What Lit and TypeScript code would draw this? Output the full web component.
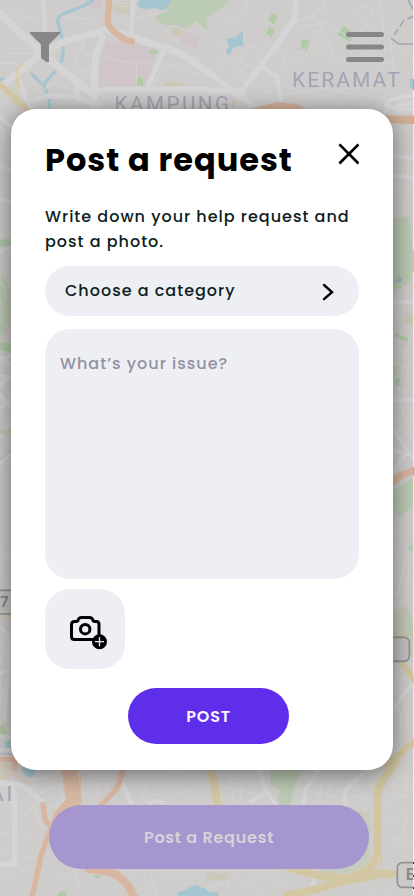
import { LitElement, html, css } from "lit";
import { customElement } from "lit/decorators.js";

@customElement("city-map")
class CityMap extends LitElement {
  static styles = css`
    :host { display: block; }
    svg { display: block; }
    .r { fill: none; stroke: #d5d5d6; stroke-linejoin: round; stroke-linecap: round; filter: drop-shadow(0 0 2px #c3c5cd); }
    .m { fill: none; stroke: #d6d5d5; stroke-width: 2.5; }
    .o { fill: none; stroke: #d7b7a2; stroke-linejoin: round; stroke-linecap: round; filter: drop-shadow(0 0 2px #dcd9d6); }
    .y { fill: none; stroke: #d3c7a3; stroke-linejoin: round; filter: drop-shadow(0 0 2px #dcd9d6); }
    .w { fill: none; stroke: #a5c6d0; stroke-linejoin: round; }
    .water { fill: #a5c6d0; }
    .g { fill: #bccbb3; }
    .g2 { fill: #b1cba8; }
    .p { fill: #d0c5c9; }
    .t { fill: #cdc8b7; }
    .place { font-family: "Roboto", sans-serif; fill: #a3a4b3; }
    .code { font-family: "Roboto", sans-serif; font-weight: 700; fill: #8b8b8b; }
  `;
  render() {
    return html`<svg width="414" height="896" viewBox="0 0 414 896">
      <defs>
        <clipPath id="a"><rect width="621" height="360" /></clipPath>
        <clipPath id="b"><rect width="621" height="408" /></clipPath>
        <clipPath id="c"><rect width="90" height="1020" /></clipPath>
      </defs>
      <rect width="414" height="896" fill="#cfcdcc" />
      <g transform="scale(.33333)"><g clip-path="url(#a)">
        <path class="p" d="M318 120L470 146L462 185L432 260H296L298 190ZM258 0H306V28L270 24ZM555 95L598 108L590 148L536 130Z" />
        <path class="t" d="M345 12H392V42L345 38ZM518 80L556 94L542 112L510 102ZM492 246H550V258H492Z" />
        <path class="g" d="M505 0H621V92L588 62L560 88L535 76L490 74L466 56L472 40L497 38Z" />
        <path class="g2" d="M448 150L474 151V162L448 161ZM410 234H429V257H408Z" />
        <path class="water" d="M418 0H515L492 32L466 25L430 28L411 18Z" />
        <path class="w" stroke-width="10" d="M280 0L250 18L205 36Q174 45 173 63L184 105L190 148L184 188M92 220L130 255L165 213M130 255L148 292V330M0 237L20 241L45 228" />
        <path class="m" d="M183 48L265 58L306 80M230 110L245 150L276 170M250 130L220 205M20 90L80 50L110 80M42 65L90 115M20 160H110M0 190H55M308 165Q350 190 400 186L465 190M410 188V260M345 48L392 60M355 20H395M250 120L270 205L210 225M180 210L232 250M0 65L50 30L108 60M240 240L275 220M100 290L160 250L230 275M455 260L500 190L621 230M300 285L360 310M390 60L480 40M480 75L555 140L600 180" />
        <path class="r" stroke-width="22" d="M-10 30L120 155L280 285M-10 272L120 165L180 130L320 88L490 142Q550 155 630 222M307 112L286 170L280 360" />
        <path class="r" stroke-width="15" d="M130 -5L135 85L115 130M400 0L393 115M492 152L440 265M275 272L350 267H630M232 240V290L150 288L80 304M60 248L90 330M230 295L300 315" />
        <path class="o" stroke-width="20" d="M328 -8L323 68Q330 92 378 120L396 125" />
        <path class="y" stroke-width="17" d="M-5 250L45 292L92 340" />
        <path class="y" stroke-width="3" d="M74 198Q56 178 48 220L50 250L22 292M55 195V270L40 300M10 280Q35 300 60 255" />
      </g></g>
      <g transform="translate(207 0) scale(.33333)"><g clip-path="url(#a)">
        <path class="g" d="M0 0H72L45 22L0 55Z" />
        <path class="g2" d="M194 39L213 47L202 72L183 63ZM186 80L205 89L194 111L177 101ZM284 119L308 121L303 150L281 147ZM410 77L438 98L430 125L390 103Z" />
        <path class="water" d="M57 118L85 112L108 91V138L82 141L65 166L56 156L66 137Z" />
        <path class="m" d="M20 220L60 165L30 120M70 175L130 200L175 160M90 210L125 135L180 160M60 190L115 220M120 0L110 40L60 70M265 65L330 45L355 0M275 80L360 70L430 115M290 180L345 80L380 170M240 190L320 120L390 180M300 145L420 200M250 175L300 200M340 70L310 40L350 20L370 60M450 100L510 180L570 195M470 70L550 120L560 210M420 55L470 15L540 50M500 30L460 95M520 0L530 110M570 130L621 180M420 190L540 130M230 285L360 265L540 300M310 300L430 260M80 230L200 280M360 260L400 325M440 265L460 325M530 150L610 120M180 130L235 165L230 205M545 180L500 240" />
        <path class="r" stroke-width="18" d="M267 -8L263 58L205 140L100 278L125 310M-5 208L90 285L150 325M-5 271H100" />
        <path class="r" stroke-width="13" d="M160 198L210 230L222 300M540 330V308Q548 295 570 296L630 282M575 335V315L630 305" />
        <path fill="none" stroke="#a5a7af" stroke-width="5" stroke-dasharray="22 10" d="M621 48L590 62L555 115" />
        <path fill="none" stroke="#a5a7af" stroke-width="5" d="M552 115L575 132H621M600 -5L621 30" />
        <path fill="#d4b39d" d="M125 326L175 315L207 306L270 312L305 330ZM530 348L621 346V360H530Z" />
        <path fill="none" stroke="#d7b7a2" stroke-width="3" d="M78 330V300L90 307" />
        <path class="water" d="M607 236H621V270L609 260Z" />
      </g></g>
      <text class="place" x="292" y="86.700" font-size="21" textLength="107.500">KERAMAT</text>
      <text class="place" x="114.500" y="111" font-size="20.500" textLength="114.500">KAMPUNG</text>
      <g transform="translate(0 760) scale(.33333)"><g clip-path="url(#b)">
        <path class="t" d="M0 12H30V60L0 65Z" />
        <path class="water" d="M68 20H112Q110 45 90 54L70 40ZM530 400L585 375L621 388V408H535Z" />
        <path class="g2" d="M173 402L185 392L202 400L197 408H175ZM278 346H305L290 357Z" />
        <path class="m" d="M0 100L25 70M60 180L100 140L130 210M55 220L105 240M120 100L180 70L190 130L145 145M90 60L150 50M260 60L330 75M300 20L290 110M400 40L440 80L420 125M450 40L500 70L490 110M530 30L600 120M500 110L570 90M0 360L100 320M70 290L120 300M180 220L140 290M170 280L230 330L160 370M220 310L240 395M400 400L500 350L530 330M450 330L470 400M520 330L560 375M550 340L615 350M430 350L450 400M0 260L40 280M0 220H44M150 190L190 165M520 40L550 20" />
        <path class="r" stroke-width="17" d="M-5 68L50 74Q80 78 105 108L129 127M42 80L45 313L0 312M370 75L395 130" />
        <path class="r" stroke-width="12" d="M445 136Q472 110 490 134" />
        <path class="o" stroke-width="17" d="M129 133L136 180L154 204M372 10Q360 75 344 93L290 150L155 198L125 280L94 420" />
        <path class="o" stroke-width="48" d="M213 -5Q206 40 216 76L222 120" />
        <path class="o" stroke-width="25" d="M222 110L172 165L154 220M265 326L330 336Q380 352 405 420" />
        <path class="o" stroke-width="3" d="M38 0V45L0 60M48 0V50L90 74M175 30L210 70M242 40V80" />
        <path class="r" stroke-width="4" d="M398 310L386 350" />
        <text class="place" x="-29" y="122" font-size="62" letter-spacing="8">AI</text>
      </g></g>
      <g transform="translate(207 760) scale(.33333)"><g clip-path="url(#b)">
        <path class="g" d="M190 30H283L265 70L250 136H205L220 90L190 70Z" />
        <path fill="#c6cbbd" d="M435 170L490 150L488 290Q486 338 430 345L338 338V325H390Z" />
        <path class="t" d="M0 338L62 342V364L0 358ZM420 155L465 150V170L430 180Z" />
        <path class="water" d="M0 394L32 397L36 408H0Z" />
        <path class="m" d="M40 45L150 70M50 80L170 110M70 40L80 130M110 35L100 120M20 40L50 120M290 50L400 70M285 90L390 110M350 35L335 130M375 35L360 130M410 65L510 85M430 55L480 130M460 35L430 130M425 105L510 115M540 75L621 85M560 110H600V50L560 60ZM540 130L600 160L590 230L545 240M540 180L575 175M550 260L621 240M0 385L100 355L170 400M100 380L180 340M120 330L160 405M200 345L230 390M60 360L80 408M300 395L440 360M340 380L350 408M390 370L420 408M440 350L500 405M310 330L370 290M180 330L250 375M570 370L540 408M490 30L500 60" />
        <path class="r" stroke-width="14" d="M157 30L178 96L132 125M178 96L210 136M335 30L295 90L288 136M480 30L415 90V136M315 380L322 360" />
        <path class="y" stroke-width="25" d="M-5 20Q18 40 22 70L32 136M572 -5L535 50Q508 85 511 120V270Q510 300 485 330M240 320Q320 350 430 358Q475 354 510 342L575 340M230 408L320 390L430 356L485 325" />
        <path class="y" stroke-width="5" d="M524 285V335M500 335L519 285" />
        <rect x="571" y="308" width="100" height="74" rx="15" fill="#cbcaca" stroke="#929292" stroke-width="5" />
        <text class="code" x="596" y="361" font-size="48">E</text>
      </g></g>
      <g transform="translate(384 100) scale(.33333)"><g clip-path="url(#c)">
        <path fill="#d3b097" d="M0 45L90 52V73L0 68Z" />
        <path class="g" d="M20 360L50 350H76L84 420L86 510L75 550L20 580Z" />
        <path class="g2" d="M35 697L75 718L70 727L32 708ZM34 836L54 834L50 860L32 852Z" />
        <path fill="#a0bac1" d="M30 545L46 527L57 538L48 549Z" />
        <path class="t" d="M68 640L90 645V680L60 665ZM27 795H48L43 825L27 830Z" />
        <path class="m" d="M27 270L75 265L65 330M75 180L60 330M27 630L90 570M27 670L60 625M27 740L90 760M27 765L90 785M60 680L30 750M85 690L60 780M27 790L75 800M60 790L40 890M75 780L60 890M27 860L90 880M45 900L90 1020M65 900L40 1020M80 910V1020M27 940L80 1020" />
        <path class="r" stroke-width="14" d="M0 166L90 174M0 226L90 233M0 606H90M0 897L90 900M0 15L30 25L90 28M20 970L55 1030" />
      </g></g>
      <g transform="translate(384 430) scale(.33333)"><g clip-path="url(#c)">
        <path class="g" d="M27 182L90 142V222L48 266L27 235ZM70 355L90 335V375Z" />
        <path fill="#c5c9b6" d="M27 545L68 532L90 580V690L27 620Z" />
        <path class="m" d="M27 290L75 365M27 350L80 380M27 410L90 390M27 430L90 410M27 460L90 440M45 370L27 430M65 390L40 500M80 380L65 500M27 490L90 480M27 520L70 510M40 720L30 800M55 730L42 810M27 750L60 770M27 790L65 800M50 850Q75 830 70 880Q65 930 50 900ZM40 840L85 820" />
        <path class="r" stroke-width="12" d="M35 10L90 90M27 60L78 75M60 80L25 130M90 755L60 790L20 850L0 880" />
        <path class="o" stroke-width="22" d="M10 168L50 136L100 118" />
        <path class="y" stroke-width="20" d="M40 680L96 755M0 1010Q40 985 65 955L100 930" />
        <rect x="-30" y="622" width="106" height="72" rx="15" fill="#c5c4c3" stroke="#929292" stroke-width="5" />
      </g></g>
      <g transform="translate(0 100) scale(.33333)"><g clip-path="url(#c)">
        <path fill="#d3c7a3" d="M38 0L92 36V50L70 25L25 0Z" />
        <path class="g2" d="M0 420L40 415V435L0 438ZM0 725L40 732V760L0 750Z" />
        <path class="g" d="M0 515L36 570V675L0 715Z" />
        <path class="p" d="M12 700L36 680V728Z" />
        <path class="t" d="M8 985L36 972V1000L15 1008Z" />
        <path class="m" d="M0 70L36 150M5 90L30 180M0 350Q20 370 35 345M0 550L25 570M0 600Q15 625 0 640M0 520L20 600M0 660L36 690" />
        <path class="r" stroke-width="11" d="M0 50L45 95M0 195L40 215M0 300L40 305M-5 455L40 440M-5 780L40 765M-5 770L40 800M-5 830H40M-5 860L40 820M-5 880L40 930M-5 930L40 890M0 1010L40 960" />
      </g></g>
      <g transform="translate(0 430) scale(.33333)"><g clip-path="url(#c)">
        <path class="y" stroke-width="18" d="M10 530L50 580" />
        <path class="g2" d="M0 890L10 882L18 908L0 920Z" />
        <path class="water" d="M15 938L35 930V955L18 950ZM70 1000H90V1020H70Z" />
        <path class="t" d="M0 0H18L10 15H0ZM0 1000H25V1020H0Z" />
        <path class="m" d="M0 350L36 400M0 400L36 360M0 430L30 440M5 620L25 700M0 750L20 850" />
        <path class="r" stroke-width="12" d="M-5 105L40 65M0 595Q25 600 27 660L15 870M-5 730L36 715M0 920H32M0 960H35" />
        <path fill="none" stroke="#a9b9c5" stroke-width="3" d="M0 90L38 55M0 972H40" />
        <path class="o" stroke-width="17" d="M-10 988H55M42 988V1030" />
        <path fill="#c9c8c7" stroke="#929292" stroke-width="5" d="M-5 481H60V552H-5Z" />
        <text class="code" x="0" y="532" font-size="46">7</text>
      </g></g>
      <path stroke="#fff" stroke-opacity=".65" d="M413.5 0V896" />
      <path stroke="#a5e08f" d="M413.5 250v22" />
      <path stroke="#ff9c4a" d="M413.5 116v8M413.5 467v9" />
      <path stroke="#4fc9ed" d="M413.5 79v11" />
      <path stroke="#ffd34d" d="M413.5 675v10M413.5 738v10" />
      <path stroke="#333" d="M413.5 862v2M413.5 875v2M413.5 887v2" />
    </svg>`;
  }
}

@customElement("app-root")
class AppRoot extends LitElement {
  static styles = css`
    :host {
      display: block; position: relative; width: 414px; height: 896px; overflow: hidden;
      font-family: Poppins, Inter, "Open Sans", sans-serif; color: #0d1d20;
    }
    * { box-sizing: border-box; }
    city-map { position: absolute; inset: 0; }
    .page { position: relative; height: 896px; display: flex; flex-direction: column; }
    .bar { height: 109px; padding: 32px 30px 0; display: flex; justify-content: space-between; flex: none; }
    svg { display: block; flex: none; }
    .modal {
      width: 382px; height: 661px; margin-left: 11px; border-radius: 25px; background: #fff;
      box-shadow: 0 4px 24px rgba(0, 0, 0, .5); padding: 27px 34px 0; display: flex; flex-direction: column; flex: none;
    }
    .head { display: flex; justify-content: space-between; height: 68px; }
    h1 { margin: 0; font-size: 32px; line-height: 48px; font-weight: 700; letter-spacing: 1px; color: #000; white-space: nowrap; }
    .close { margin-top: 7px; }
    p { margin: 0 0 11px; font-size: 16px; line-height: 25px; font-weight: 500; letter-spacing: 1px; height: 51px; white-space: nowrap; }
    .category {
      height: 50px; border-radius: 25px; background: #eeeff5; display: flex; align-items: center;
      justify-content: space-between; padding: 0 25px 2px 20px; margin-bottom: 13px; flex: none;
      font-size: 16px; font-weight: 500; letter-spacing: 1px;
    }
    .chevron { margin-top: 4px; }
    .issue {
      height: 250px; border-radius: 25px; background: #eeeff5; color: #9292a0; padding: 23px 15px; flex: none;
      font-size: 16px; line-height: 24px; font-weight: 500; letter-spacing: 1px; margin-bottom: 10px;
    }
    .photo { width: 80px; height: 80px; border-radius: 25px; background: #eeeff5; padding: 25px 16px 0 24px; margin-bottom: 19px; flex: none; }
    .post {
      width: 161px; height: 56px; border-radius: 28px; background: #5f2eea; color: #f7f7fc; margin-left: 83px;
      display: flex; align-items: center; justify-content: center; font-size: 16px; font-weight: 600; letter-spacing: .75px; flex: none;
    }
    .request {
      width: 320px; height: 64px; border-radius: 32px; background: #a596cf; color: #d5d3d8; margin: 35px 0 0 49px;
      display: flex; align-items: center; justify-content: center; font-size: 16px; font-weight: 600; letter-spacing: .75px; flex: none;
    }
  `;
  render() {
    return html`
      <city-map></city-map>
      <div class="page">
        <div class="bar">
          <svg width="30" height="30"><path fill="#878787" d="M0 0H30V1.500L19 12.500V30H16.500L11 26V12.500L0 1.500Z" /></svg>
          <svg width="38" height="30"><path fill="none" stroke="#878787" stroke-width="5" stroke-linecap="round" d="M2.500 2.500H35.500M2.500 15H35.500M2.500 27.500H35.500" /></svg>
        </div>
        <div class="modal">
          <div class="head">
            <h1>Post a request</h1>
            <svg class="close" width="21" height="22"><path fill="none" stroke="#000" stroke-width="2.700" d="M1.400 1.400L20.500 20.500M20.500 1.400L1.400 20.500" /></svg>
          </div>
          <p>Write down your help request and<br />post a photo.</p>
          <div class="category">
            <span>Choose a category</span>
            <svg class="chevron" width="12" height="18"><path fill="none" stroke="#000" stroke-width="2.400" stroke-linecap="round" d="M2 2L10 9.200L2 16.200" /></svg>
          </div>
          <div class="issue">What’s your issue?</div>
          <div class="photo">
            <svg width="40" height="37">
              <path fill="none" stroke="#000" stroke-width="3" stroke-linejoin="round" stroke-linecap="round" d="M24 25.500H5.500Q2.500 25.500 2.500 22.500V10.500Q2.500 7.500 5.500 7.500H7.500Q8.500 7.500 9 6.500L9.500 5Q10.500 3.500 12.500 3.500H20.500Q22.500 3.500 23.500 5L24 6.500Q24.500 7.500 25.500 7.500H27.500Q30 7.500 30 10.500V21" />
              <circle cx="16.200" cy="15.200" r="4.700" fill="none" stroke="#000" stroke-width="3" />
              <circle cx="30.500" cy="27.700" r="7.500" fill="#000" />
              <path stroke="#eeeff5" stroke-width="1.300" d="M26 27.700H35M30.500 23.200V32.200" />
            </svg>
          </div>
          <div class="post">POST</div>
        </div>
        <div class="request">Post a Request</div>
      </div>`;
  }
}
